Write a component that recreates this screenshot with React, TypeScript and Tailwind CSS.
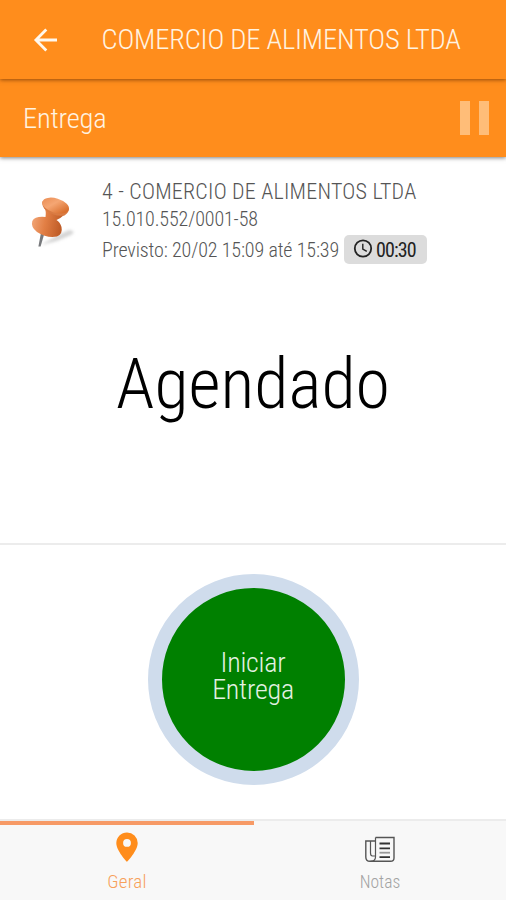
import React from "react";

const TITLE = "COMERCIO DE ALIMENTOS LTDA";

function BackArrow() {
  return (
    <svg className="block h-[24px] w-[24px]" viewBox="0 0 24 24" fill="none" stroke="#fff8ee" strokeWidth="2.8">
      <path d="M24 12H4M13.3 1.4L2.9 12l10.4 10.6" />
    </svg>
  );
}

function PushPin() {
  return (
    <svg className="block h-[60px] w-[50px]" viewBox="0 0 50 60">
      <defs>
        <linearGradient id="cap" x1="0" y1="0" x2="1" y2="0.5">
          <stop offset="0" stopColor="#e98a50" />
          <stop offset="0.5" stopColor="#f5a673" />
          <stop offset="1" stopColor="#d9702f" />
        </linearGradient>
        <linearGradient id="neck" x1="0" y1="0" x2="1" y2="0.2">
          <stop offset="0" stopColor="#f5ad80" />
          <stop offset="0.5" stopColor="#e27f45" />
          <stop offset="1" stopColor="#bf5c27" />
        </linearGradient>
        <filter id="soft" x="-30%" y="-50%" width="160%" height="200%">
          <feGaussianBlur stdDeviation="1.5" />
        </filter>
      </defs>
      <path d="M14 54L29 45L42 39Q50 40 44 44L30 50Z" fill="#b9b9b9" opacity="0.6" filter="url(#soft)" />
      <path d="M14.3 40L17.8 41L13.6 55.5L11.4 55.5Z" fill="#77797c" />
      <path d="M17 14Q19.5 21 18.5 26Q8 25 5.3 30Q3.5 36 10 41Q20 47.5 30 45.5Q36 43 34.5 36Q33 31 29.5 29Q34 27 37 24Z" fill="url(#neck)" />
      <path d="M15.2 10.5Q15 16 18.5 19Q27 26 37.5 24.5Q42.5 21 41.8 17Z" fill="#d97b43" />
      <ellipse cx="28.6" cy="14.6" rx="13.8" ry="7.2" transform="rotate(17 28.6 14.6)" fill="url(#cap)" />
    </svg>
  );
}

function Clock() {
  return (
    <svg className="block h-[20px] w-[20px]" viewBox="0 0 20 20" fill="none" stroke="#222">
      <circle cx="10" cy="9.5" r="8.2" strokeWidth="1.8" />
      <path d="M9.8 4.7V10L13.8 12.4" strokeWidth="1.4" />
    </svg>
  );
}

function MapPin() {
  return (
    <svg className="block h-[30px] w-[22px]" viewBox="0 0 22 30">
      <path fillRule="evenodd" fill="#ff8d1c" d="M11 0.4A10.7 10.7 0 0 0 .3 11C.3 18.8 11 29.8 11 29.8S21.7 18.8 21.7 11A10.7 10.7 0 0 0 11 .4ZM11 7a3.9 3.9 0 1 1 0 7.8A3.9 3.9 0 0 1 11 7Z" />
    </svg>
  );
}

function Newspaper() {
  return (
    <svg className="block h-[27px] w-[32px]" viewBox="0 0 32 27" fill="none" stroke="#555" strokeWidth="1.4">
      <path d="M11.5 1.5H30V22Q30 25.3 26.5 25.3H6Q1.8 25.3 1.8 21V5H11.5" />
      <path d="M11.5 1.5V21Q11.5 25.3 6.5 25.3M6.5 5V17Q6.5 20 8.5 20H11.5" strokeWidth="1.2" />
      <path d="M15.5 7.5H26M15.5 12.3H26M15.5 21.2H26" stroke="#333" strokeWidth="1.8" />
      <path d="M15.5 16.7H26" stroke="#999" strokeWidth="1.8" />
    </svg>
  );
}

export default function App() {
  return (
    <div className="flex h-[900px] w-[506px] flex-col overflow-hidden bg-white font-['Roboto_Condensed','Roboto',sans-serif] font-light whitespace-nowrap [font-stretch:75%]">
      <header className="z-20 flex h-[79px] shrink-0 items-center bg-[#ff8d1c] pl-[33px] shadow-[0_1px_4px_rgba(90,40,0,0.65)]">
        <BackArrow />
        <h1 className="ml-[44.5px] pt-[2px] text-[28.5px] leading-none tracking-[-0.18px] text-[#fff3e2]">{TITLE}</h1>
      </header>
      <section className="z-10 flex h-[78px] shrink-0 items-center justify-between bg-[#ff8d1c] pr-[17px] pl-[23px] shadow-[0_1px_4px_rgba(0,0,0,0.5)]">
        <h2 className="pt-[2px] text-[28.5px] leading-none tracking-[-0.2px] text-[#fff3e2]">Entrega</h2>
        <div className="flex gap-[9px]">
          <span className="h-[34px] w-[10px] bg-[#ffbd78]" />
          <span className="h-[34px] w-[10px] bg-[#ffbd78]" />
        </div>
      </section>
      <main className="flex h-[388px] shrink-0 flex-col border-b-2 border-[#ececec]">
        <div className="flex pt-[19px] pl-[27px] text-[#555]">
          <div className="mt-[15px]">
            <PushPin />
          </div>
          <div className="ml-[25px]">
            <p className="h-[29px] text-[22px] leading-[31px] tracking-[0.24px]">4 - {TITLE}</p>
            <p className="h-[28px] text-[20px] leading-[28px] tracking-[-0.12px]">15.010.552/0001-58</p>
            <div className="flex h-[32px] items-center">
              <p className="w-[241.5px] pt-[2px] text-[20px] leading-[30px] tracking-[-0.13px]">Previsto: 20/02 15:09 até 15:39</p>
              <span className="flex h-[29px] w-[83px] items-center gap-[3px] rounded-[5px] bg-[#dcdcdc] pl-[9.5px] text-[20px] font-normal text-[#222]">
                <Clock />
                <span className="pt-[2px] tracking-[-0.9px]">00:30</span>
              </span>
            </div>
          </div>
        </div>
        <p className="mt-[78px] text-center text-[70px] leading-[82px] text-black">Agendado</p>
      </main>
      <section className="flex flex-1 items-start justify-center pt-[29px]">
        <button className="flex h-[211px] w-[211px] items-center justify-center rounded-full border-[14px] border-[#cfdcec] bg-[#008000] pb-[8px] text-[28px] leading-[27px] tracking-[-0.25px] text-[#e4f1e4]">
          <span>
            Iniciar
            <br />
            Entrega
          </span>
        </button>
      </section>
      <nav className="flex h-[81px] shrink-0 border-t-2 border-[#ececec] bg-[#f8f8f8]">
        <div className="flex w-[254px] flex-col items-center border-t-[4px] border-[#f79a66] pt-[7px] text-[19px] leading-none tracking-[0.2px] text-[#f7a05a]">
          <MapPin />
          <span className="mt-[10px]">Geral</span>
        </div>
        <div className="flex flex-1 flex-col items-center pt-[15px] text-[17.5px] leading-none text-[#a3a3a3]">
          <Newspaper />
          <span className="mt-[11px]">Notas</span>
        </div>
      </nav>
    </div>
  );
}
